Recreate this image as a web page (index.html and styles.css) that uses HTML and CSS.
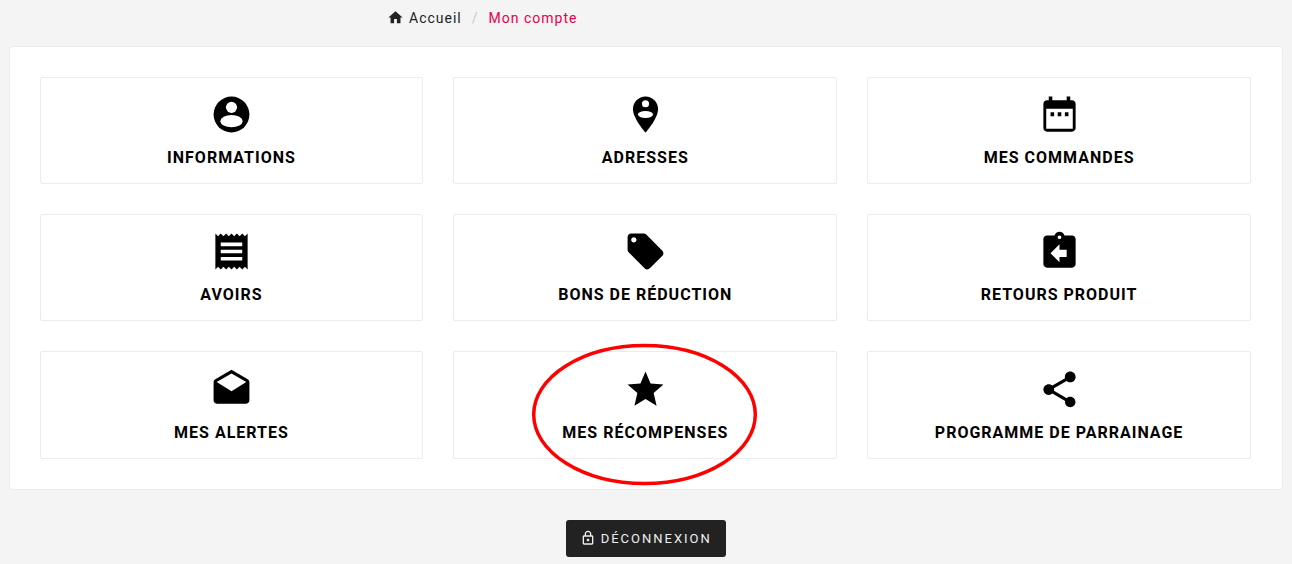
FILE: index.html
```html
<!DOCTYPE html>
<html lang="fr">
<head>
  <meta charset="UTF-8" />
  <meta name="viewport" content="width=device-width, initial-scale=1" />
  <title>Mon compte</title>
  <link rel="stylesheet" href="styles.css">
</head>
<body>
  <nav class="breadcrumb">
    <a class="crumb" href="#">
      <svg class="home-icon" viewBox="0 0 24 24"><path d="M10 20v-6h4v6h5v-8h3L12 3 2 12h3v8z"/></svg>
      Accueil
    </a>
    <span class="crumb-sep">/</span>
    <span class="crumb-current">Mon compte</span>
  </nav>

  <main class="panel">
    <div class="account-links">
      <a class="account-card" href="#">
        <svg class="card-icon" viewBox="0 0 24 24">
          <circle cx="12" cy="12" r="10"/>
          <circle class="cut" cx="12" cy="8" r="3.1"/>
          <ellipse class="cut" cx="12" cy="15.7" rx="6.2" ry="3.4"/>
        </svg>
        <span class="card-label">Informations</span>
      </a>
      <a class="account-card" href="#">
        <svg class="card-icon" viewBox="0 0 24 24">
          <path d="M12 2C8.14 2 5 5.14 5 9c0 5.25 7 13 7 13s7-7.75 7-13c0-3.86-3.14-7-7-7z"/>
          <circle class="cut" cx="12" cy="6" r="2"/>
          <ellipse class="cut" cx="12" cy="12" rx="4.2" ry="1.9"/>
        </svg>
        <span class="card-label">Adresses</span>
      </a>
      <a class="account-card" href="#">
        <svg class="card-icon" viewBox="0 0 24 24">
          <path fill-rule="evenodd" d="M6 1.900h2V4h8V1.900h2V4h1c1.100 0 2 .9 2 2v13.600c0 1.100-.9 2-2 2H5c-1.100 0-2-.9-2-2V6c0-1.100.9-2 2-2h1zM4.600 8.800v11.200h14.800V8.800z"/>
          <path d="M7 10.800h2V13H7zM11 10.800h2V13h-2zM15 10.800h2V13h-2z"/>
        </svg>
        <span class="card-label">Mes commandes</span>
      </a>
      <a class="account-card" href="#">
        <svg class="card-icon" viewBox="0 0 24 24"><path d="M18 17H6v-2h12v2zm0-4H6v-2h12v2zm0-4H6V7h12v2zM3 22l1.500-1.500L6 22l1.500-1.500L9 22l1.500-1.500L12 22l1.500-1.500L15 22l1.500-1.500L18 22l1.500-1.500L21 22V2l-1.500 1.500L18 2l-1.500 1.500L15 2l-1.500 1.500L12 2l-1.500 1.500L9 2 7.500 3.500 6 2 4.500 3.500 3 2v20z"/></svg>
        <span class="card-label">Avoirs</span>
      </a>
      <a class="account-card" href="#">
        <svg class="card-icon" viewBox="0 0 24 24"><path d="M21.410 11.580l-9-9C12.050 2.220 11.550 2 11 2H4c-1.100 0-2 .9-2 2v7c0 .55.22 1.050.59 1.420l9 9c.36.36.86.58 1.410.58.55 0 1.050-.22 1.410-.59l7-7c.37-.36.59-.86.59-1.410 0-.55-.23-1.060-.59-1.420zM5.500 7C4.670 7 4 6.330 4 5.500S4.670 4 5.500 4 7 4.670 7 5.500 6.330 7 5.500 7z"/></svg>
        <span class="card-label">Bons de réduction</span>
      </a>
      <a class="account-card" href="#">
        <svg class="card-icon" viewBox="0 0 24 24"><path d="M19 3h-4.180C14.400 1.840 13.300 1 12 1c-1.300 0-2.400.84-2.820 2H5c-1.100 0-2 .9-2 2v14c0 1.100.9 2 2 2h14c1.100 0 2-.9 2-2V5c0-1.100-.9-2-2-2zm-7 0c.55 0 1 .45 1 1s-.45 1-1 1-1-.45-1-1 .45-1 1-1zm4 12h-4v3l-5-5 5-5v3h4v4z"/></svg>
        <span class="card-label">Retours produit</span>
      </a>
      <a class="account-card" href="#">
        <svg class="card-icon" viewBox="0 0 24 24"><path d="M21.990 8c0-.72-.37-1.350-.94-1.700L12 1 2.950 6.300C2.380 6.650 2 7.280 2 8v10c0 1.100.9 2 2 2h16c1.100 0 2-.9 2-2l-.01-10zM12 13L3.740 7.840 12 3l8.260 4.840L12 13z"/></svg>
        <span class="card-label">Mes alertes</span>
      </a>
      <a class="account-card" href="#">
        <svg class="card-icon" viewBox="0 0 24 24"><path d="M12 17.270L18.180 21l-1.640-7.030L22 9.240l-7.190-.61L12 2 9.190 8.630 2 9.240l5.460 4.730L5.820 21z"/></svg>
        <span class="card-label">Mes récompenses</span>
        <svg class="highlight" viewBox="0 0 225 141"><ellipse cx="112.500" cy="70.500" rx="110.800" ry="69"/></svg>
      </a>
      <a class="account-card" href="#">
        <svg class="card-icon" viewBox="0 0 24 24"><path d="M18 16.080c-.76 0-1.440.3-1.960.77L8.910 12.700c.05-.23.09-.46.09-.7s-.04-.47-.09-.7l7.050-4.110c.54.5 1.250.81 2.040.81 1.660 0 3-1.340 3-3s-1.340-3-3-3-3 1.340-3 3c0 .24.04.47.09.7L8.040 9.810C7.500 9.310 6.790 9 6 9c-1.660 0-3 1.340-3 3s1.340 3 3 3c.79 0 1.500-.31 2.040-.81l7.120 4.160c-.05.21-.08.43-.08.65 0 1.610 1.310 2.920 2.920 2.920 1.610 0 2.920-1.310 2.920-2.920s-1.310-2.920-2.920-2.920z"/></svg>
        <span class="card-label">Programme de parrainage</span>
      </a>
    </div>
  </main>

  <div class="logout">
    <a class="logout-btn" href="#">
      <svg class="lock-icon" viewBox="0 0 24 24"><path d="M18 8h-1V6c0-2.760-2.240-5-5-5S7 3.240 7 6v2H6c-1.100 0-2 .9-2 2v10c0 1.100.9 2 2 2h12c1.100 0 2-.9 2-2V10c0-1.100-.9-2-2-2zM9 6c0-1.660 1.340-3 3-3s3 1.340 3 3v2H9V6zm9 14H6V10h12v10zm-6-3c1.100 0 2-.9 2-2s-.9-2-2-2-2 .9-2 2 .9 2 2 2z"/></svg>
      Déconnexion
    </a>
  </div>
</body>
</html>
```

FILE: styles.css
```css
body {
  margin: 0;
  background-color: #f4f4f4;
  color: #000;
  font-family: Roboto, "Liberation Sans", sans-serif;
}

a {
  color: inherit;
  text-decoration: none;
}

.breadcrumb {
  display: flex;
  align-items: center;
  height: 35.8px;
  padding: 0 0 1px 387px;
  font-size: 14px;
  letter-spacing: 1px;
}

.crumb {
  display: flex;
  align-items: center;
  gap: 5px;
  color: #222;
}

.home-icon {
  width: 17px;
  height: 17px;
  fill: #222;
}

.crumb-sep {
  margin: 0 10px;
  color: #c8c8c8;
}

.crumb-current {
  color: #e6004c;
}

.panel {
  margin: 9px 9px 0 8.6px;
  padding: 30px 31px 30px 30px;
  background-color: #fff;
  border: 1px solid #ececec;
  border-radius: 4px;
}

.account-links {
  display: grid;
  grid-template-columns: repeat(3, 1fr);
  gap: 30px;
}

.account-card {
  position: relative;
  display: flex;
  flex-direction: column;
  align-items: center;
  padding: 15.3px 10px 14.7px;
  background-color: #fff;
  border: 1px solid #ececec;
  border-radius: 2px;
}

.card-icon {
  width: 43px;
  height: 43px;
  fill: #000;
}

.card-icon .cut {
  fill: #fff;
}

.card-label {
  margin-top: 11px;
  font-size: 16px;
  font-weight: 700;
  line-height: 1.333;
  letter-spacing: 1px;
  text-transform: uppercase;
}

/* red ring drawn on top of the rewards card */
.highlight {
  position: absolute;
  left: 77.5px;
  top: -8px;
  width: 225px;
  height: 141px;
  overflow: visible;
  pointer-events: none;
}

.highlight ellipse {
  fill: none;
  stroke: #f00;
  stroke-width: 3.5;
}

.logout {
  display: flex;
  justify-content: center;
  margin-top: 30.2px;
}

.logout-btn {
  display: flex;
  align-items: center;
  gap: 5px;
  padding: 0 14.5px 0 14px;
  height: 37px;
  background-color: #222;
  color: #eee;
  border-radius: 3px;
  font-size: 13px;
  letter-spacing: 2px;
  text-transform: uppercase;
}

.lock-icon {
  width: 16px;
  height: 16px;
  fill: #eee;
}
```
